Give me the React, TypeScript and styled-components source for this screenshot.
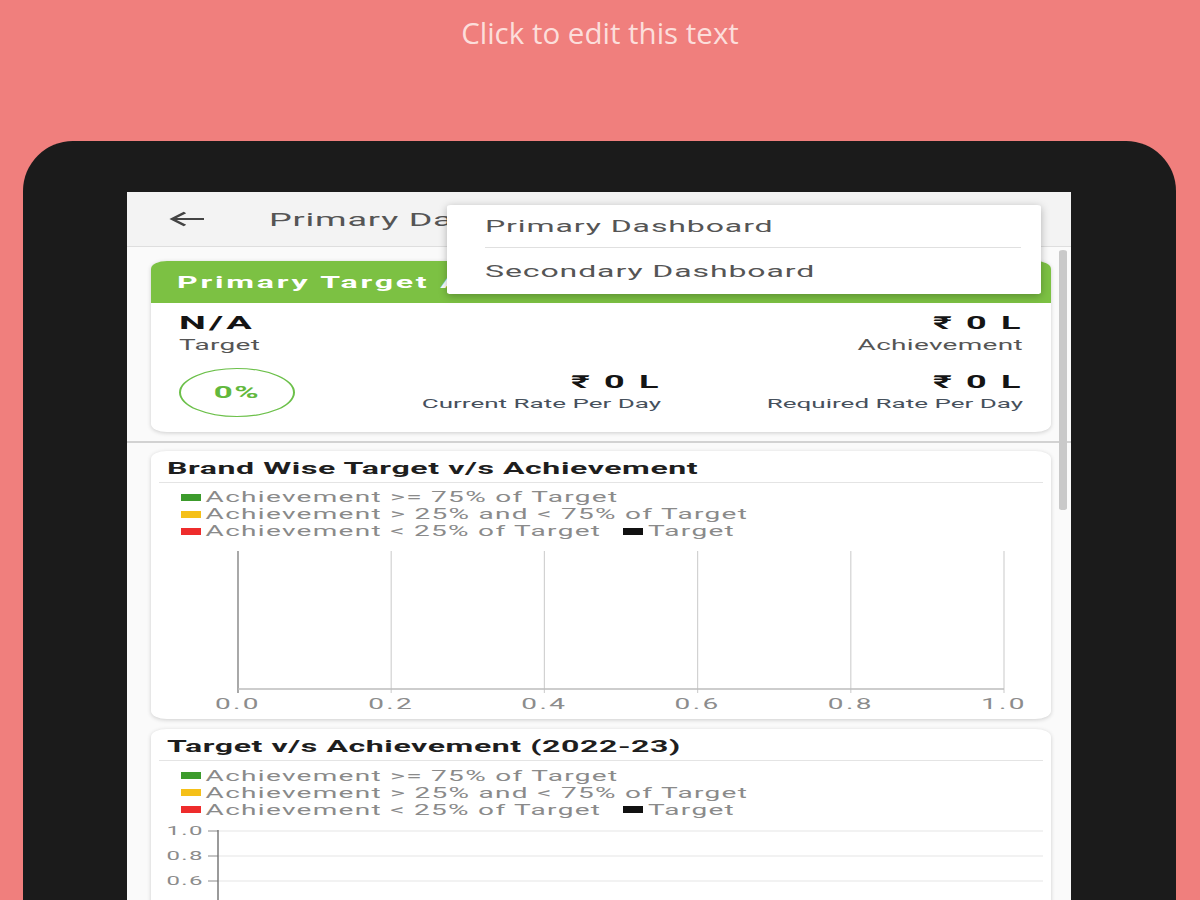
import React from 'react'
import styled, { createGlobalStyle } from 'styled-components'

const GlobalStyle = createGlobalStyle`
  html, body {
    margin: 0;
    padding: 0;
  }
  body {
    width: 1200px;
    height: 900px;
    overflow: hidden;
    background: #f07f7d;
    font-family: Roboto, "Noto Sans", "DejaVu Sans", sans-serif;
  }
`;

const Page = styled.div`
  width: 1200px;
  height: 900px;
  display: flex;
  flex-direction: column;
  overflow: hidden;
`;

const Caption = styled.div`
  flex: none;
  height: 141px;
  box-sizing: border-box;
  padding-top: 13px;
  text-align: center;
  font-family: "Open Sans", "Liberation Sans", sans-serif;
  font-size: 29.5px;
  line-height: 40px;
  color: #fcdedb;
`;

const Tablet = styled.div`
  flex: 1;
  min-height: 0;
  display: flex;
  margin: 0 24px 0 23px;
  padding: 51px 105px 0 104px;
  background: #1b1b1b;
  border-radius: 50px 50px 0 0;
`;

const Screen = styled.div`
  flex: 1;
  position: relative;
  overflow: hidden;
  background: #fafafa;
`;

/* the capture is stretched sideways, so the app is laid out narrow and scaled */
const Stretched = styled.div`
  position: relative;
  width: 472px;
  transform: scaleX(2);
  transform-origin: 0 0;
`;

const AppBar = styled.div`
  height: 55px;
  box-sizing: border-box;
  display: flex;
  align-items: center;
  padding-left: 21px;
  background: #f3f3f3;
  border-bottom: 1px solid #dedede;
`;

const AppTitle = styled.div`
  margin-left: 32px;
  font-size: 18px;
  color: #555;
  letter-spacing: 0.4px;
`;

const Menu = styled.div`
  position: absolute;
  top: 13px;
  left: 159.5px;
  width: 297px;
  background: #fff;
  border-radius: 2px;
  box-shadow: 0 2px 6px rgba(0, 0, 0, 0.28);
`;

const MenuItem = styled.div<{ h: number }>`
  height: ${(p) => p.h}px;
  display: flex;
  align-items: center;
  padding-left: 19.5px;
  font-size: 16px;
  color: #555;
  letter-spacing: 0.45px;
`;

const MenuDivider = styled.div`
  height: 1px;
  margin: 0 10px 0 19.5px;
  background: #e0e0e0;
`;

const ScrollThumb = styled.div`
  position: absolute;
  top: 58px;
  left: 466px;
  width: 3.5px;
  height: 260px;
  border-radius: 2px;
  background: #c9c9c9;
`;

const Section = styled.div<{ top: number }>`
  padding: ${(p) => p.top}px 10px 0 12px;
  display: flex;
  flex-direction: column;
`;

const Card = styled.div<{ gap?: number }>`
  margin-top: ${(p) => p.gap || 0}px;
  background: #fff;
  border-radius: 8px;
  overflow: hidden;
  box-shadow: 0 1px 3px rgba(0, 0, 0, 0.18);
`;

const GreenBar = styled.div`
  height: 42px;
  display: flex;
  align-items: center;
  padding-left: 13px;
  background: #7cc143;
  color: #fff;
  font-size: 16px;
  font-weight: 700;
  letter-spacing: 1.4px;
  white-space: nowrap;
`;

const TargetBody = styled.div`
  padding: 10px 14px 15px 14px;
`;

const TopRow = styled.div`
  display: flex;
  justify-content: space-between;
`;

const Stat = styled.div<{ align?: string }>`
  display: flex;
  flex-direction: column;
  align-items: ${(p) => (p.align === 'right' ? 'flex-end' : 'flex-start')};
`;

const Value = styled.div<{ big?: boolean }>`
  font-size: ${(p) => (p.big ? 19 : 18)}px;
  line-height: 20px;
  font-weight: 700;
  color: #141414;
  letter-spacing: ${(p) => (p.big ? 1.6 : 1.3)}px;
  white-space: pre;
`;

const Label = styled.div<{ small?: boolean }>`
  margin-top: 3px;
  font-size: ${(p) => (p.small ? 13 : 14)}px;
  line-height: 18px;
  color: ${(p) => (p.small ? '#46505c' : '#555')};
  letter-spacing: ${(p) => (p.small ? 0 : 0.15)}px;
`;

const RateRow = styled.div`
  margin-top: 14px;
  display: grid;
  grid-template-columns: 60px 1fr 1fr;
  align-items: center;
`;

const Ring = styled.div`
  width: 58px;
  height: 49px;
  box-sizing: border-box;
  border: 1.5px solid #6cc04a;
  border-radius: 50%;
  display: flex;
  align-items: center;
  justify-content: center;
  font-size: 16.5px;
  font-weight: 700;
  color: #62b83c;
  letter-spacing: 0.8px;
`;

const RuleFull = styled.div`
  height: 1.5px;
  margin-top: 9px;
  background: #d2d2d2;
`;

const ChartTitle = styled.div`
  padding: 0 0 3px 8px;
  font-size: 16px;
  line-height: 20px;
  font-weight: 700;
  color: #1e1e1e;
  letter-spacing: 0.3px;
  white-space: nowrap;
`;

const ChartCard = styled(Card)`
  padding: 8px 0 7px;
`;

const TitleRule = styled.div`
  height: 1px;
  margin: 0 4px;
  background: #e4e4e4;
`;

const Legend = styled.div`
  padding: 6px 0 0 14.5px;
`;

const LegendRow = styled.div`
  display: flex;
  gap: 10.5px;
  height: 17px;
  align-items: center;
`;

const LegendItem = styled.div`
  display: flex;
  align-items: center;
  gap: 2.8px;
  font-size: 14px;
  color: #8a8a8a;
  letter-spacing: 0.65px;
  white-space: nowrap;
`;

const Swatch = styled.span<{ color: string }>`
  width: 10px;
  height: 7px;
  background: ${(p) => p.color};
`;

const Plot = styled.svg<{ gap: number }>`
  display: block;
  margin-top: ${(p) => p.gap}px;
`;

const legendRows = [
  [{ color: '#3c9b2c', label: 'Achievement >= 75% of Target' }],
  [{ color: '#f5c018', label: 'Achievement > 25% and < 75% of Target' }],
  [
    { color: '#ee2c2c', label: 'Achievement < 25% of Target' },
    { color: '#111', label: 'Target' },
  ],
];

const ChartLegend = () => (
  <Legend>
    {legendRows.map((row, i) => (
      <LegendRow key={i}>
        {row.map((item) => (
          <LegendItem key={item.label}>
            <Swatch color={item.color} />
            {item.label}
          </LegendItem>
        ))}
      </LegendRow>
    ))}
  </Legend>
);

const BackArrow = () => (
  <svg width="18" height="16" viewBox="0 0 18 16">
    <path d="M17.5 8H1.5M8 1.5L1.5 8L8 14.5" fill="none" stroke="#444" strokeWidth="1.8" />
  </svg>
);

const BrandChart = () => {
  const xs = [0, 1, 2, 3, 4, 5].map((i) => 43.5 + i * 76.6);
  return (
    <Plot gap={6.5} width={450} height={166}>
      {xs.map((x, i) => (
        <line key={i} x1={x} x2={x} y1={5} y2={147} stroke={i === 0 ? '#6f6f6f' : '#d2d2d2'} strokeWidth={0.6} />
      ))}
      <line x1={43.5} x2={426.5} y1={143} y2={143} stroke="#bdbdbd" strokeWidth={1.5} />
      {xs.map((x, i) => (
        <text key={i} x={x} y={163} textAnchor="middle" fontSize="14" fill="#8c8c8c" letterSpacing="1.2">
          {(i / 5).toFixed(1)}
        </text>
      ))}
    </Plot>
  );
};

const YearChart = () => {
  const ys = [9, 34, 59];
  const labels = ['1.0', '0.8', '0.6'];
  return (
    <Plot gap={3.5} width={450} height={100}>
      {ys.map((y, i) => (
        <g key={i}>
          <line x1={33.5} x2={446} y1={y} y2={y} stroke="#e6e6e6" strokeWidth={1.2} />
          <line x1={28.5} x2={33.5} y1={y} y2={y} stroke="#8a8a8a" strokeWidth={1} />
          <text x={26.5} y={y + 4} textAnchor="end" fontSize="12" fill="#8c8c8c" letterSpacing="0.7">
            {labels[i]}
          </text>
        </g>
      ))}
      <line x1={33.5} x2={33.5} y1={8} y2={100} stroke="#6f6f6f" strokeWidth={0.7} />
    </Plot>
  );
};

const App: React.FC = () => {
  return (
    <Page>
      <GlobalStyle />
      <Caption>Click to edit this text</Caption>
      <Tablet>
        <Screen>
          <Stretched>
            <AppBar>
              <BackArrow />
              <AppTitle>Primary Dashboard</AppTitle>
            </AppBar>

            <Section top={14}>
              <Card>
                <GreenBar>Primary Target Achievement</GreenBar>
                <TargetBody>
                  <TopRow>
                    <Stat>
                      <Value big>N/A</Value>
                      <Label>Target</Label>
                    </Stat>
                    <Stat align="right">
                      <Value>₹ 0 L</Value>
                      <Label>Achievement</Label>
                    </Stat>
                  </TopRow>
                  <RateRow>
                    <Ring>0%</Ring>
                    <Stat align="right">
                      <Value>₹ 0 L</Value>
                      <Label small>Current Rate Per Day</Label>
                    </Stat>
                    <Stat align="right">
                      <Value>₹ 0 L</Value>
                      <Label small>Required Rate Per Day</Label>
                    </Stat>
                  </RateRow>
                </TargetBody>
              </Card>
            </Section>

            <RuleFull />

            <Section top={8}>
              <ChartCard>
                <ChartTitle>Brand Wise Target v/s Achievement</ChartTitle>
                <TitleRule />
                <ChartLegend />
                <BrandChart />
              </ChartCard>
              <ChartCard gap={10}>
                <ChartTitle>Target v/s Achievement (2022-23)</ChartTitle>
                <TitleRule />
                <ChartLegend />
                <YearChart />
              </ChartCard>
            </Section>

            <Menu>
              <MenuItem h={42}>Primary Dashboard</MenuItem>
              <MenuDivider />
              <MenuItem h={46}>Secondary Dashboard</MenuItem>
            </Menu>
            <ScrollThumb />
          </Stretched>
        </Screen>
      </Tablet>
    </Page>
  );
};

export default App;
